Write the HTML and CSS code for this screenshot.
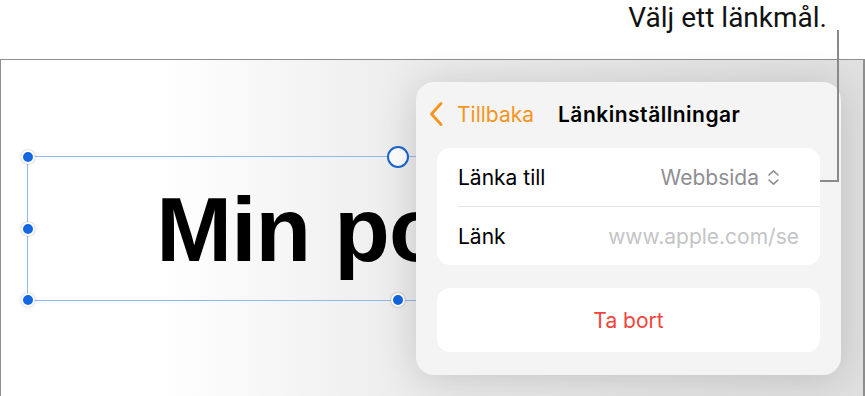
FILE: index.html
```html
<!DOCTYPE html>
<html lang="sv">
<head>
<meta charset="UTF-8" />
<title>Länkinställningar</title>
<link rel="stylesheet" href="styles.css">
</head>
<body>
<div class="caption">Välj ett länkmål.</div>
<div class="canvas">
    <div class="textbox">
        <span class="title-text">Min portfölj</span>
        <span class="handle h-tl"></span>
        <span class="handle h-ml"></span>
        <span class="handle h-bl"></span>
        <span class="handle h-bm"></span>
        <span class="handle open h-tm"></span>
    </div>

    <div class="popover">
        <div class="pop-header">
            <button class="back-btn">
                <svg width="14" height="24" viewBox="0 0 14 24"><path d="M12 1.5 L2.5 12 L12 22.5" fill="none" stroke="#f7941d" stroke-width="2.8" stroke-linecap="round" stroke-linejoin="round"/></svg>
                <span>Tillbaka</span>
            </button>
            <div class="pop-title">Länkinställningar</div>
        </div>
        <div class="group">
            <div class="row">
                <span class="label">Länka till</span>
                <span class="value">Webbsida
                    <svg width="13" height="17" viewBox="0 0 13 17"><path d="M2 6 L6.5 1.8 L11 6 M2 11 L6.5 15.2 L11 11" fill="none" stroke="#8e8e93" stroke-width="1.6" stroke-linecap="round" stroke-linejoin="round"/></svg>
                </span>
            </div>
            <div class="row">
                <span class="label">Länk</span>
                <span class="placeholder">www.apple.com/se</span>
            </div>
        </div>
        <div class="group">
            <button class="delete-btn">Ta bort</button>
        </div>
    </div>

    <div class="callout-line"></div>
</div>
</body>
</html>
```

FILE: styles.css
```css
html, body {
    margin: 0;
    padding: 0;
}
body {
    width: 865px;
    height: 396px;
    overflow: hidden;
    background: #fff;
    font-family: Inter, "Noto Sans", sans-serif;
    color: #000;
}
.caption {
    height: 59px;
    box-sizing: border-box;
    padding: 0 38px 0 0;
    text-align: right;
    font-family: Roboto, "Liberation Sans", sans-serif;
    font-size: 28px;
    line-height: 36px;
    color: #111;
}
.canvas {
    position: relative;
    height: 337px;
    box-sizing: border-box;
    border: 1px solid #8e8e8e;
    border-bottom: none;
    border-right-width: 2px;
    background: linear-gradient(to right, #fff 18%, #ececec 48%, #e0e0e0 100%);
}

/* text box on the slide */
.textbox {
    position: absolute;
    left: 26px;
    top: 96px;
    width: 742px;
    height: 145px;
    border: 1px solid #93b6f2;
    box-sizing: border-box;
    display: flex;
    align-items: center;
    justify-content: center;
}
.title-text {
    font-family: "Liberation Sans", Arial, sans-serif;
    font-weight: bold;
    font-size: 91px;
    letter-spacing: -1px;
    margin-top: 2px;
}
.handle {
    position: absolute;
    width: 10px;
    height: 10px;
    border-radius: 50%;
    background: #1467e0;
    border: 2px solid #fff;
    box-shadow: 0 0 2px rgba(0, 0, 0, 0.35);
    transform: translate(-50%, -50%);
}
.handle.open {
    width: 18px;
    height: 18px;
    background: #fff;
    border: 2px solid #1a66d0;
    box-shadow: none;
}
.h-tl { left: 0; top: 0; }
.h-ml { left: 0; top: 50%; }
.h-bl { left: 0; top: 100%; }
.h-bm { left: 50%; top: 100%; }
.h-tm { left: 50%; top: 0; }

/* popover */
.popover {
    position: absolute;
    left: 415px;
    top: 22px;
    width: 425px;
    height: 293px;
    box-sizing: border-box;
    padding: 0 21px;
    background: #f4f4f4;
    border-radius: 18px;
    box-shadow: 0 4px 40px rgba(0, 0, 0, 0.16);
}
.pop-header {
    height: 66px;
    display: flex;
    align-items: center;
    padding-bottom: 2px;
    box-sizing: border-box;
}
.back-btn {
    display: flex;
    align-items: center;
    gap: 14px;
    margin-left: -8px;
    padding: 0;
    border: none;
    background: none;
    font: inherit;
    font-size: 21px;
    color: #f7941d;
}
.pop-title {
    margin-left: 24px;
    font-size: 21px;
    font-weight: 600;
    letter-spacing: 0.5px;
}
.group {
    background: #fff;
    border-radius: 13px;
    overflow: hidden;
}
.group + .group {
    margin-top: 23px;
}
.row {
    height: 58px;
    display: flex;
    align-items: center;
    justify-content: space-between;
    padding: 0 21px;
    font-size: 21px;
}
.row + .row {
    border-top: 1px solid #e3e3e6;
    margin-left: 21px;
    padding-left: 0;
}
.value {
    display: flex;
    align-items: center;
    gap: 8px;
    color: #8e8e93;
    margin-right: 19px;
}
.placeholder {
    color: #c4c4c7;
}
.delete-btn {
    display: block;
    width: 100%;
    height: 64px;
    border: none;
    background: none;
    font: inherit;
    font-size: 21px;
    color: #f4433a;
}

/* callout pointer */
.callout-line {
    position: absolute;
    left: 819px;
    top: -30px;
    width: 17px;
    height: 150px;
    border-right: 2px solid #8a8a8a;
    border-bottom: 2px solid #8a8a8a;
}
```
